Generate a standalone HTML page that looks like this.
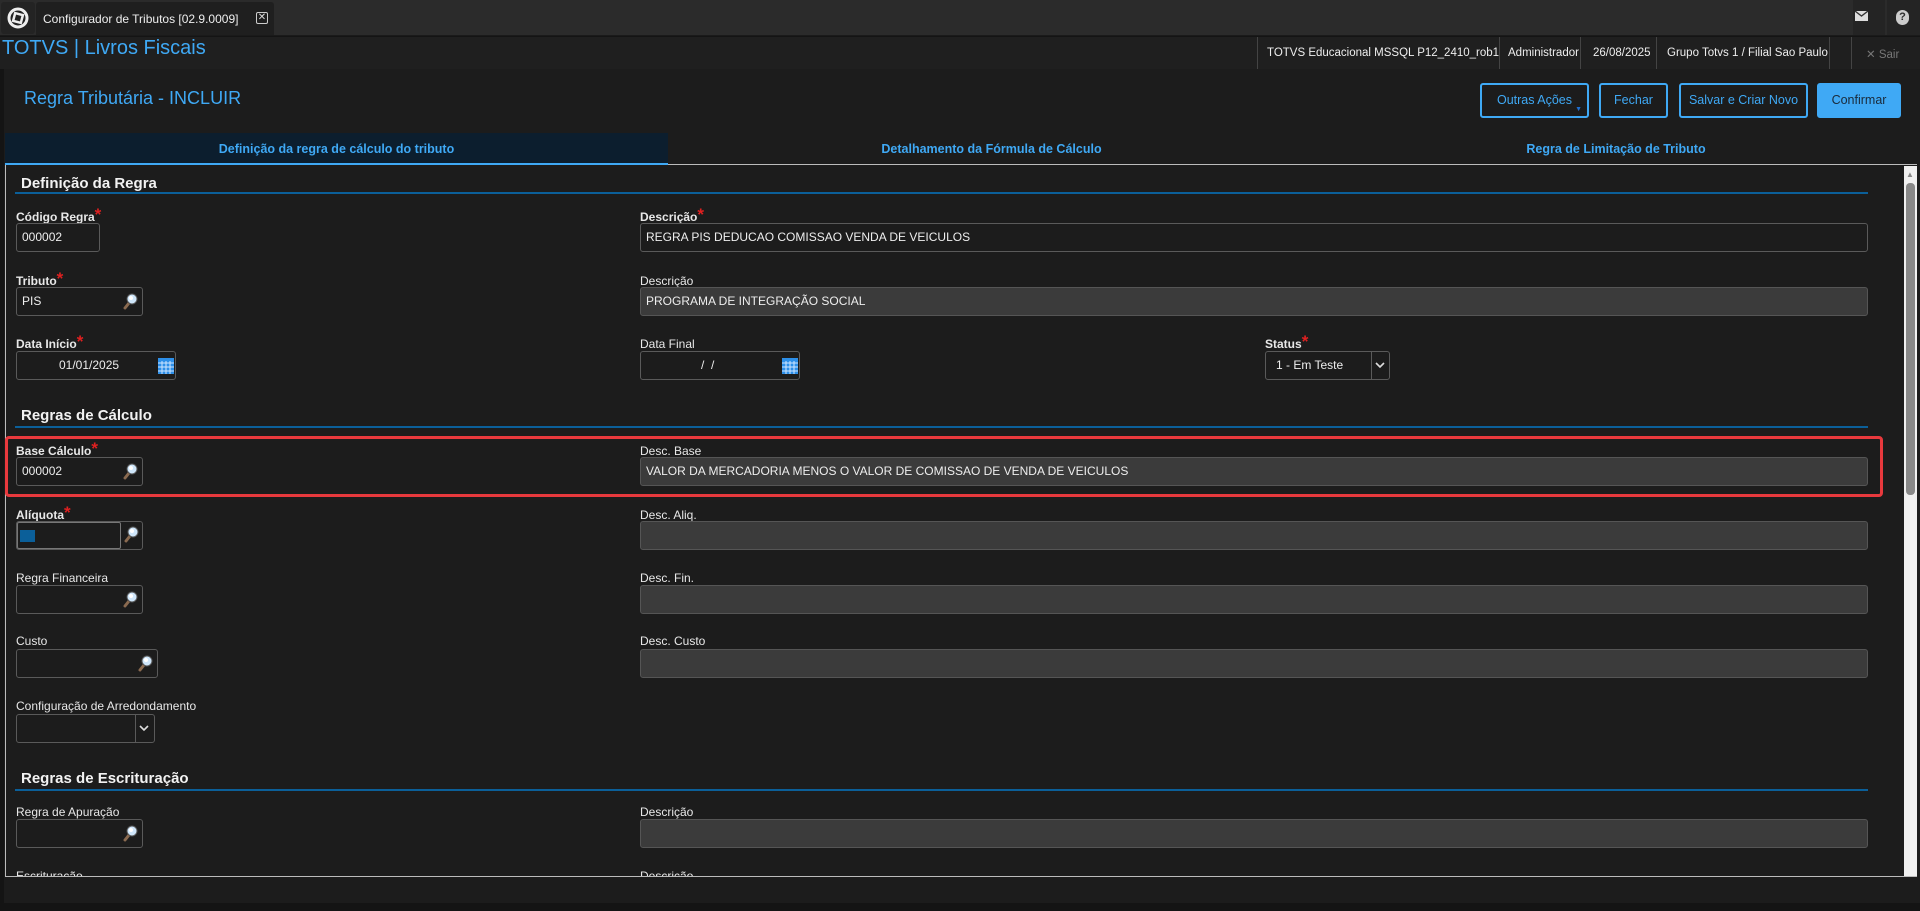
<!DOCTYPE html>
<html><head><meta charset="utf-8"><style>
*{box-sizing:border-box;margin:0;padding:0}
body{width:1920px;height:911px;background:#141414;font-family:"Liberation Sans",Arial,sans-serif;color:#eee;position:relative;overflow:hidden}
.a{position:absolute}
.lbl{position:absolute;font-size:12px;color:#e8e8e8;white-space:nowrap}
.lbl.b{font-weight:bold}
.lbl .s{color:#e02020;font-size:17px;line-height:10px;vertical-align:top}
.in{position:absolute;height:29px;border:1px solid #5a5a5a;border-radius:3px;background:#1c1c1c;font-size:12px;color:#eee;padding:0 5px;line-height:27px;white-space:nowrap}
.dis{background:#3b3b3b;border-color:#555}
.mag{position:absolute;right:4px;top:5px}
.sec{position:absolute;left:21px;font-size:15px;font-weight:bold;color:#f2f2f2}
.line{position:absolute;left:15px;width:1853px;height:2px;background:#0b5f99}
.btn{position:absolute;top:83px;height:35px;border:2px solid #3fa9f5;border-radius:3px;color:#3fa9f5;font-size:12.5px;text-align:center;line-height:31px}
.tab{position:absolute;top:133px;height:32px;font-size:12.5px;font-weight:bold;color:#3fa9f5;text-align:center;line-height:32px}
.sep{position:absolute;top:37px;height:32px;width:1px;background:#444}
.ht{position:absolute;top:47px;font-size:11.5px;color:#eee;white-space:nowrap}
</style></head><body>
<svg width="0" height="0" style="position:absolute"><defs><symbol id="m" viewBox="0 0 16 18"><line x1="3" y1="15" x2="7" y2="10" stroke="#8a6a50" stroke-width="3" stroke-linecap="round"/><circle cx="10" cy="6" r="5" fill="#cfe6fa" stroke="#555" stroke-width="1"/><circle cx="9" cy="5" r="2" fill="#fff"/></symbol></defs></svg>
<!-- top bar -->
<div class="a" style="left:0;top:0;width:1920px;height:36px;background:#2b2b2b;border-bottom:1px solid #1a1a1a"></div>
<div class="a" style="left:1px;top:2px;width:34px;height:32px;background:#232323;border-radius:3px"></div>
<svg class="a" style="left:7px;top:7px" width="22" height="22" viewBox="0 0 22 22"><circle cx="11" cy="11" r="9" fill="none" stroke="#eee" stroke-width="3"/><rect x="7" y="7" width="8" height="8" fill="none" stroke="#eee" stroke-width="2.5" transform="rotate(15 11 11)"/></svg>
<div class="a" style="left:36px;top:2px;width:238px;height:33px;background:#1f1f1f;border-radius:3px 3px 0 0"></div>
<div class="a" style="left:43px;top:12px;font-size:12px;color:#eee">Configurador de Tributos [02.9.0009]</div>
<div class="a" style="left:256px;top:12px;width:12px;height:12px;border:1px solid #ccc;border-radius:2px;font-size:10px;line-height:10px;text-align:center;color:#ddd">✕</div>
<div class="a" style="left:1853px;top:0;width:32px;height:35px;background:#242424"></div>
<div class="a" style="left:1887px;top:0;width:33px;height:35px;background:#242424"></div>
<svg class="a" style="left:1855px;top:11px" width="13" height="10" viewBox="0 0 13 10"><rect width="13" height="10" fill="#ddd"/><path d="M0 0 L6.5 5 L13 0" stroke="#333" fill="none" stroke-width="1.3"/></svg>
<div class="a" style="left:1896px;top:10px;width:13px;height:15px;border-radius:7px;background:#ccc;color:#2b2b2b;font-size:11px;font-weight:bold;text-align:center;line-height:15px">?</div>
<!-- title row -->
<div class="a" style="left:0;top:37px;width:1920px;height:32px;background:#1f1f1f"></div>
<div class="a" style="left:2px;top:37px;font-size:20px;color:#3fa9f5">TOTVS | Livros Fiscais</div>
<div class="sep" style="left:1257px"></div><div class="sep" style="left:1499px"></div><div class="sep" style="left:1580px"></div><div class="sep" style="left:1656px"></div><div class="sep" style="left:1829px"></div><div class="sep" style="left:1851px"></div>
<div class="ht" style="left:1267px">TOTVS Educacional MSSQL P12_2410_rob1</div>
<div class="ht" style="left:1508px">Administrador</div>
<div class="ht" style="left:1593px">26/08/2025</div>
<div class="ht" style="left:1667px">Grupo Totvs 1 / Filial Sao Paulo</div>
<div class="ht" style="left:1866px;color:#777">✕ Sair</div>
<!-- main panel -->
<div class="a" style="left:4px;top:69px;width:1916px;height:808px;background:#1c1c1c"></div>
<div class="a" style="left:24px;top:88px;font-size:18px;color:#3fa9f5">Regra Tributária - INCLUIR</div>
<div class="btn" style="left:1480px;width:109px">Outras Ações<span style="position:absolute;right:5px;bottom:2px;font-size:7px;color:#1e6fd0;line-height:8px">▼</span></div>
<div class="btn" style="left:1599px;width:69px">Fechar</div>
<div class="btn" style="left:1679px;width:129px">Salvar e Criar Novo</div>
<div class="btn" style="left:1817px;width:84px;background:#3fa9f5;color:#1a2a3a">Confirmar</div>
<!-- tabs -->
<div class="tab" style="left:5px;width:663px;background:#0c1e2e;border-bottom:2px solid #3fa9f5">Definição da regra de cálculo do tributo</div>
<div class="tab" style="left:668px;width:647px">Detalhamento da Fórmula de Cálculo</div>
<div class="tab" style="left:1315px;width:602px">Regra de Limitação de Tributo</div>
<div class="a" style="left:668px;top:164px;width:1249px;height:1px;background:#bbb"></div>
<!-- content -->
<div class="a" style="left:5px;top:165px;width:1px;height:712px;background:#bbb"></div>
<div class="a" style="left:5px;top:876px;width:1912px;height:1px;background:#bbb"></div>
<div class="a" style="left:1904px;top:166px;width:13px;height:710px;background:#f0f0f0"></div>
<div class="a" style="left:1906px;top:170px;font-size:8px;color:#888">▲</div>
<div class="a" style="left:1906px;top:183px;width:9px;height:312px;background:#888;border-radius:4px"></div>

<div class="sec" style="top:175px">Definição da Regra</div>
<div class="line" style="top:192px"></div>
<div class="lbl b" style="left:16px;top:210px">Código Regra<span class="s">*</span></div>
<div class="in" style="left:16px;top:223px;width:84px">000002</div>
<div class="lbl b" style="left:640px;top:210px">Descrição<span class="s">*</span></div>
<div class="in" style="left:640px;top:223px;width:1228px">REGRA PIS DEDUCAO COMISSAO VENDA DE VEICULOS</div>

<div class="lbl b" style="left:16px;top:274px">Tributo<span class="s">*</span></div>
<div class="in" style="left:16px;top:287px;width:127px">PIS<svg class="mag" width="16" height="18"><use href="#m"/></svg></div>
<div class="lbl" style="left:640px;top:274px">Descrição</div>
<div class="in dis" style="left:640px;top:287px;width:1228px">PROGRAMA DE INTEGRAÇÃO SOCIAL</div>

<div class="lbl b" style="left:16px;top:337px">Data Início<span class="s">*</span></div>
<div class="in" style="left:16px;top:351px;width:160px;padding-left:42px">01/01/2025</div>
<div class="lbl" style="left:640px;top:337px">Data Final</div>
<div class="in" style="left:640px;top:351px;width:160px;padding-left:60px">/ &nbsp;/</div>
<svg class="a" style="left:158px;top:358px" width="16" height="16" viewBox="0 0 16 16"><rect width="16" height="16" fill="#2d8fe8"/><path d="M0 5H16M0 9H16M0 13H16M4 3V16M8 3V16M12 3V16" stroke="#cfe6ff" stroke-width="1"/></svg>
<svg class="a" style="left:782px;top:358px" width="16" height="16" viewBox="0 0 16 16"><rect width="16" height="16" fill="#2d8fe8"/><path d="M0 5H16M0 9H16M0 13H16M4 3V16M8 3V16M12 3V16" stroke="#cfe6ff" stroke-width="1"/></svg>
<div class="lbl b" style="left:1265px;top:337px">Status<span class="s">*</span></div>
<div class="in" style="left:1265px;top:351px;width:125px;padding-left:10px">1 - Em Teste</div>
<div class="a" style="left:1371px;top:352px;width:1px;height:27px;background:#5a5a5a"></div>
<svg class="a" style="left:1375px;top:361px" width="10" height="8"><path d="M1 2 L5 6 L9 2" stroke="#ddd" stroke-width="1.6" fill="none"/></svg>

<div class="sec" style="top:407px">Regras de Cálculo</div>
<div class="line" style="top:426px"></div>
<div class="a" style="left:5px;top:436px;width:1878px;height:61px;border:3px solid #e8393d;border-radius:4px"></div>
<div class="lbl b" style="left:16px;top:444px">Base Cálculo<span class="s">*</span></div>
<div class="in" style="left:16px;top:457px;width:127px">000002<svg class="mag" width="16" height="18"><use href="#m"/></svg></div>
<div class="lbl" style="left:640px;top:444px">Desc. Base</div>
<div class="in dis" style="left:640px;top:457px;width:1228px">VALOR DA MERCADORIA MENOS O VALOR DE COMISSAO DE VENDA DE VEICULOS</div>

<div class="lbl b" style="left:16px;top:508px">Alíquota<span class="s">*</span></div>
<div class="in" style="left:16px;top:521px;width:127px"></div>
<div class="a" style="left:17px;top:522px;width:104px;height:27px;border:1px solid #777;border-radius:2px"></div>
<div class="a" style="left:20px;top:530px;width:15px;height:12px;background:#0b5f99"></div>
<svg class="a" style="left:123px;top:526px" width="16" height="18"><use href="#m"/></svg>
<div class="lbl" style="left:640px;top:508px">Desc. Aliq.</div>
<div class="in dis" style="left:640px;top:521px;width:1228px"></div>

<div class="lbl" style="left:16px;top:571px">Regra Financeira</div>
<div class="in" style="left:16px;top:585px;width:127px"><svg class="mag" width="16" height="18"><use href="#m"/></svg></div>
<div class="lbl" style="left:640px;top:571px">Desc. Fin.</div>
<div class="in dis" style="left:640px;top:585px;width:1228px"></div>

<div class="lbl" style="left:16px;top:634px">Custo</div>
<div class="in" style="left:16px;top:649px;width:142px"><svg class="mag" width="16" height="18"><use href="#m"/></svg></div>
<div class="lbl" style="left:640px;top:634px">Desc. Custo</div>
<div class="in dis" style="left:640px;top:649px;width:1228px"></div>

<div class="lbl" style="left:16px;top:699px">Configuração de Arredondamento</div>
<div class="in" style="left:16px;top:714px;width:139px"></div>
<div class="a" style="left:135px;top:715px;width:1px;height:27px;background:#5a5a5a"></div>
<svg class="a" style="left:139px;top:724px" width="10" height="8"><path d="M1 2 L5 6 L9 2" stroke="#ddd" stroke-width="1.6" fill="none"/></svg>

<div class="sec" style="top:770px">Regras de Escrituração</div>
<div class="line" style="top:789px"></div>
<div class="lbl" style="left:16px;top:805px">Regra de Apuração</div>
<div class="in" style="left:16px;top:819px;width:127px"><svg class="mag" width="16" height="18"><use href="#m"/></svg></div>
<div class="lbl" style="left:640px;top:805px">Descrição</div>
<div class="in dis" style="left:640px;top:819px;width:1228px"></div>
<div class="lbl" style="left:16px;top:869px;height:7px;overflow:hidden">Escrituração</div>
<div class="lbl" style="left:640px;top:869px;height:7px;overflow:hidden">Descrição</div>
<!-- bottom bar -->
<div class="a" style="left:4px;top:877px;width:1916px;height:26px;background:#1c1c1c"></div>
</body></html>
